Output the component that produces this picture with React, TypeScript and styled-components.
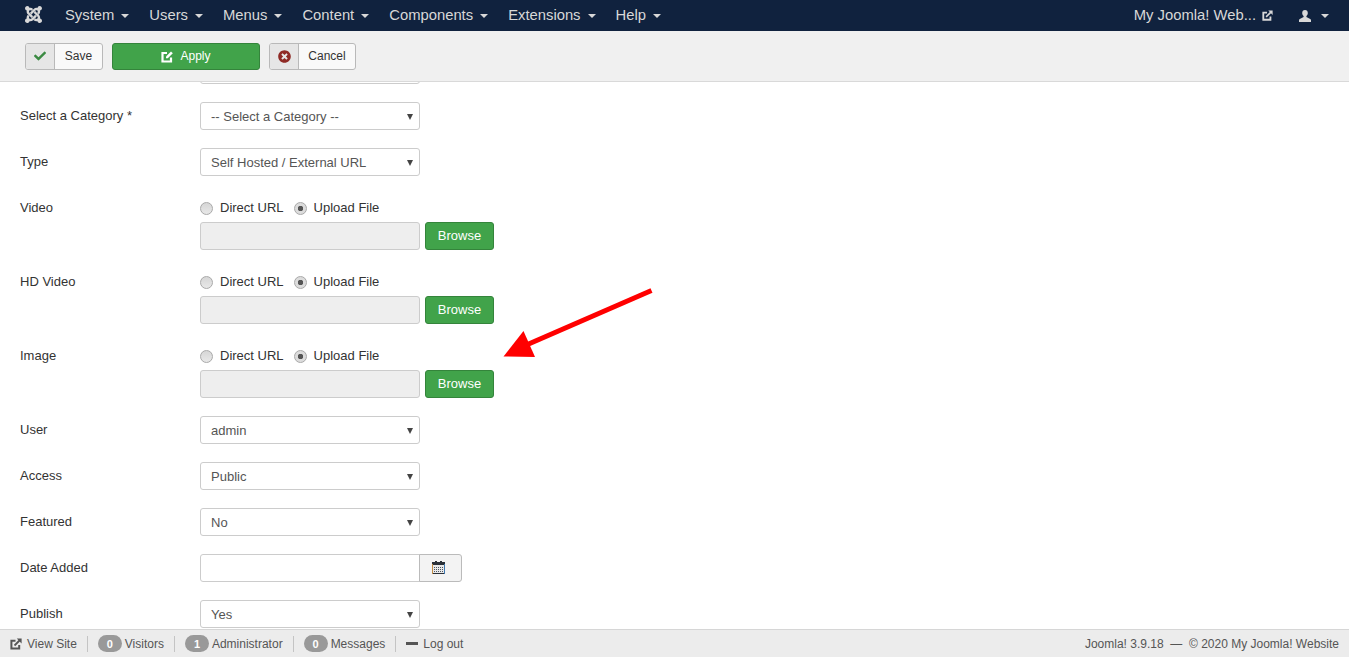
import React from 'react';
import styled, { createGlobalStyle } from 'styled-components';
import { FaCheck, FaTimesCircle } from 'react-icons/fa';
import { SiJoomla } from 'react-icons/si';

const GlobalStyle = createGlobalStyle`
  html, body {
    margin: 0;
    padding: 0;
    height: 100%;
    overflow: hidden;
    background: #fff;
    font-family: "Liberation Sans", Arial, sans-serif;
    font-size: 13px;
    color: #333;
  }
`;

const Page = styled.div`
  height: 100vh;
  display: flex;
  flex-direction: column;
  position: relative;
  overflow: hidden;
`;

const NavBar = styled.div`
  height: 31px;
  flex: none;
  display: flex;
  align-items: center;
  background: #10223e;
  color: #d8d8d8;
  font-size: 14.8px;
`;

const Logo = styled(SiJoomla)`
  width: 17px;
  height: 17px;
  margin: 0 13px 2px 25px;
  color: #d8d8d8;
`;

const NavItem = styled.span`
  display: flex;
  align-items: center;
  padding: 0 10px;
  margin-bottom: 1px;
`;

const Caret = styled.i`
  width: 0;
  height: 0;
  margin-left: 7px;
  margin-top: 1px;
  border-left: 4px solid transparent;
  border-right: 4px solid transparent;
  border-top: 4px solid #d8d8d8;
`;

const NavRight = styled.div`
  margin-left: auto;
  display: flex;
  align-items: center;
  padding-right: 20px;
`;

const SiteName = styled.span`
  display: flex;
  align-items: center;
  gap: 6px;
  margin-right: 26px;
  margin-bottom: 1px;
`;

const UserCaret = styled(Caret)`
  margin-left: 10px;
`;

const ToolBar = styled.div`
  height: 50px;
  flex: none;
  display: flex;
  align-items: center;
  gap: 9px;
  padding-left: 25px;
  background: #f0f0f0;
  border-bottom: 1px solid #d9d9d9;
`;

const ToolButton = styled.div`
  height: 27px;
  display: flex;
  align-items: stretch;
  box-sizing: border-box;
  background: #f9f9f9;
  border: 1px solid #b9b9b9;
  border-radius: 3px;
  color: #333;
  font-size: 12px;
`;

const ToolIcon = styled.span`
  width: 28px;
  display: flex;
  align-items: center;
  justify-content: center;
  background: #e6e6e6;
  border-right: 1px solid #b9b9b9;
  border-radius: 2px 0 0 2px;
`;

const ToolText = styled.span<{ $width: number }>`
  width: ${(props) => props.$width}px;
  display: flex;
  align-items: center;
  justify-content: center;
`;

const ApplyButton = styled.div`
  width: 148px;
  height: 27px;
  box-sizing: border-box;
  display: flex;
  align-items: center;
  justify-content: center;
  gap: 6px;
  background: #41a34a;
  border: 1px solid #34843b;
  border-radius: 3px;
  color: #fff;
  font-size: 12px;
`;

const Content = styled.div`
  flex: 1;
  min-height: 0;
  overflow: hidden;
  padding-left: 20px;
`;

const Form = styled.div`
  margin-top: -26px;
  display: flex;
  flex-direction: column;
  gap: 18px;
`;

const Row = styled.div`
  display: flex;
  align-items: flex-start;
`;

const Label = styled.div`
  width: 180px;
  flex: none;
  line-height: 28px;
  color: #333;
  font-size: 13px;
`;

const Field = styled.div`
  display: flex;
  flex-direction: column;
`;

const SelectWrap = styled.div`
  position: relative;
  width: 220px;
  height: 28px;

  &::after {
    content: '';
    position: absolute;
    right: 7px;
    top: 12px;
    border-left: 3.5px solid transparent;
    border-right: 3.5px solid transparent;
    border-top: 6px solid #444;
  }
`;

const Select = styled.select`
  appearance: none;
  width: 100%;
  height: 100%;
  box-sizing: border-box;
  padding: 0 10px;
  background: #fff;
  border: 1px solid #ccc;
  border-radius: 3px;
  color: #555;
  font: 13px "Liberation Sans", Arial, sans-serif;
`;

const Radios = styled.div`
  height: 28px;
  display: flex;
  align-items: center;
  color: #333;
`;

const Radio = styled.span<{ $checked?: boolean }>`
  width: 13px;
  height: 13px;
  box-sizing: border-box;
  margin-right: 7px;
  border: 1px solid #a9a9a9;
  border-radius: 50%;
  background: ${(props) =>
    props.$checked
      ? 'radial-gradient(circle, #555 0 2.5px, #dcdcdc 3px)'
      : 'linear-gradient(#d6d6d6, #e8e8e8)'};
`;

const RadioText = styled.span`
  margin: 0 10px 2px 0;
`;

const UploadRow = styled.div`
  display: flex;
  gap: 5px;
`;

const FileInput = styled.div`
  width: 220px;
  height: 28px;
  box-sizing: border-box;
  background: #eee;
  border: 1px solid #ccc;
  border-radius: 3px;
`;

const BrowseButton = styled.div`
  width: 69px;
  height: 28px;
  box-sizing: border-box;
  padding-bottom: 2px;
  display: flex;
  align-items: center;
  justify-content: center;
  background: #41a34a;
  border: 1px solid #34843b;
  border-radius: 3px;
  color: #fff;
`;

const DateGroup = styled.div`
  display: flex;
  height: 28px;
`;

const DateInput = styled.div`
  width: 220px;
  box-sizing: border-box;
  background: #fff;
  border: 1px solid #ccc;
  border-radius: 3px 0 0 3px;
`;

const DateButton = styled.div`
  width: 43px;
  box-sizing: border-box;
  padding: 0 4px 2px 0;
  display: flex;
  align-items: center;
  justify-content: center;
  margin-left: -1px;
  background: #f3f3f3;
  border: 1px solid #bbb;
  border-radius: 0 3px 3px 0;
`;

const Footer = styled.div`
  height: 28px;
  flex: none;
  box-sizing: border-box;
  display: flex;
  align-items: center;
  justify-content: space-between;
  padding: 0 10px;
  background: #ececec;
  border-top: 1px solid #d6d6d6;
  color: #555;
  font-size: 12px;
`;

const FooterLeft = styled.div`
  display: flex;
  align-items: center;
`;

const FooterItem = styled.span`
  display: flex;
  align-items: center;
  height: 16px;
  padding-right: 10px;
  margin-right: 10px;
  border-right: 1px solid #c4c4c4;

  &:last-child {
    border-right: 0;
  }
`;

const FooterIconGap = styled.span`
  margin-left: 5px;
`;

const Badge = styled.span`
  width: 24px;
  height: 17px;
  display: flex;
  align-items: center;
  justify-content: center;
  margin-right: 3px;
  border-radius: 9px;
  background: #999;
  color: #fff;
  font-size: 11px;
  font-weight: bold;
`;

const Dash = styled.i`
  width: 12px;
  height: 3px;
  margin: 0 5px 0 0;
  background: #555;
`;

const ArrowLayer = styled.svg`
  position: absolute;
  left: 500px;
  top: 285px;
`;

const ExternalIcon: React.FC<{ size: number; color: string }> = ({ size, color }) => (
  <svg width={size} height={size} viewBox="0 0 12 12" fill="none">
    <path d="M9.2 7v3.6H1.4V2.8H5.5" stroke={color} strokeWidth="2" />
    <path d="M4.5 7.5 10 2" stroke={color} strokeWidth="1.8" />
    <path d="M6.8 .6H11.6V5.4Z" fill={color} />
  </svg>
);

const UserIcon: React.FC = () => (
  <svg width="12" height="12" viewBox="0 0 12 12" fill="#d8d8d8">
    <path d="M6 0C4.2 0 3.2 1.3 3.2 3c0 1.4.6 2.5 1.4 3.1v1L.8 9C.3 9.2 0 9.6 0 10.1V12h12v-1.9c0-.5-.3-.9-.8-1.1L7.4 7.1v-1C8.2 5.5 8.8 4.4 8.8 3 8.8 1.3 7.8 0 6 0Z" />
  </svg>
);

const EditIcon: React.FC = () => (
  <svg width="13" height="13" viewBox="0 0 13 13" fill="none">
    <path d="M10 7.5V11.5H1.5V3H6" stroke="#fff" strokeWidth="2.2" />
    <path d="M5 6.5 10 1.5 11.8 3.3 6.8 8.3H5Z" fill="#fff" />
  </svg>
);

const CalendarIcon: React.FC = () => (
  <svg width="13" height="13" viewBox="0 0 13 13" shapeRendering="crispEdges">
    <rect x="0" y="1" width="13" height="12" fill="#2a3038" />
    <rect x="3" y="0" width="2" height="2" fill="#2a3038" />
    <rect x="8" y="0" width="2" height="2" fill="#2a3038" />
    <rect x="0" y="3" width="1" height="10" fill="#c08a45" />
    <rect x="12" y="3" width="1" height="10" fill="#3f78b0" />
    <rect x="1" y="4" width="11" height="8" fill="#e8e8e8" />
    <path d="M2 6h9M2 8h9M2 10h9" stroke="#4c5560" strokeWidth="1" strokeDasharray="1 1" />
  </svg>
);

const menus = ['System', 'Users', 'Menus', 'Content', 'Components', 'Extensions', 'Help'];

const SelectField: React.FC<{ label: string; value: string }> = ({ label, value }) => (
  <Row>
    <Label>{label}</Label>
    <SelectWrap>
      <Select defaultValue={value}>
        <option>{value}</option>
      </Select>
    </SelectWrap>
  </Row>
);

const UploadField: React.FC<{ label: string }> = ({ label }) => (
  <Row>
    <Label>{label}</Label>
    <Field>
      <Radios>
        <Radio />
        <RadioText>Direct URL</RadioText>
        <Radio $checked />
        <RadioText>Upload File</RadioText>
      </Radios>
      <UploadRow>
        <FileInput />
        <BrowseButton>Browse</BrowseButton>
      </UploadRow>
    </Field>
  </Row>
);

const App: React.FC = () => (
  <Page>
    <GlobalStyle />
    <NavBar>
      <Logo />
      {menus.map((menu) => (
        <NavItem key={menu}>
          {menu}
          <Caret />
        </NavItem>
      ))}
      <NavRight>
        <SiteName>
          My Joomla! Web...
          <ExternalIcon size={11} color="#d8d8d8" />
        </SiteName>
        <UserIcon />
        <UserCaret />
      </NavRight>
    </NavBar>

    <ToolBar>
      <ToolButton>
        <ToolIcon>
          <FaCheck size={12} color="#3b8a42" />
        </ToolIcon>
        <ToolText $width={47}>Save</ToolText>
      </ToolButton>
      <ApplyButton>
        <EditIcon />
        Apply
      </ApplyButton>
      <ToolButton>
        <ToolIcon>
          <FaTimesCircle size={13} color="#8f2a25" />
        </ToolIcon>
        <ToolText $width={56}>Cancel</ToolText>
      </ToolButton>
    </ToolBar>

    <Content>
      <Form>
        <SelectField label="" value="" />
        <SelectField label="Select a Category *" value="-- Select a Category --" />
        <SelectField label="Type" value="Self Hosted / External URL" />
        <UploadField label="Video" />
        <UploadField label="HD Video" />
        <UploadField label="Image" />
        <SelectField label="User" value="admin" />
        <SelectField label="Access" value="Public" />
        <SelectField label="Featured" value="No" />
        <Row>
          <Label>Date Added</Label>
          <DateGroup>
            <DateInput />
            <DateButton>
              <CalendarIcon />
            </DateButton>
          </DateGroup>
        </Row>
        <SelectField label="Publish" value="Yes" />
      </Form>
    </Content>

    <Footer>
      <FooterLeft>
        <FooterItem>
          <ExternalIcon size={12} color="#555" />
          <FooterIconGap>View Site</FooterIconGap>
        </FooterItem>
        <FooterItem>
          <Badge>0</Badge>
          Visitors
        </FooterItem>
        <FooterItem>
          <Badge>1</Badge>
          Administrator
        </FooterItem>
        <FooterItem>
          <Badge>0</Badge>
          Messages
        </FooterItem>
        <FooterItem>
          <Dash />
          Log out
        </FooterItem>
      </FooterLeft>
      <span>Joomla! 3.9.18 &nbsp;—&nbsp; © 2020 My Joomla! Website</span>
    </Footer>

    <ArrowLayer width="160" height="80" viewBox="500 285 160 80">
      <path d="M651.5 290.5 524 346" stroke="#f00" strokeWidth="5" />
      <path d="M503.5 356.5 523.5 331 535 357Z" fill="#f00" />
    </ArrowLayer>
  </Page>
);

export default App;
